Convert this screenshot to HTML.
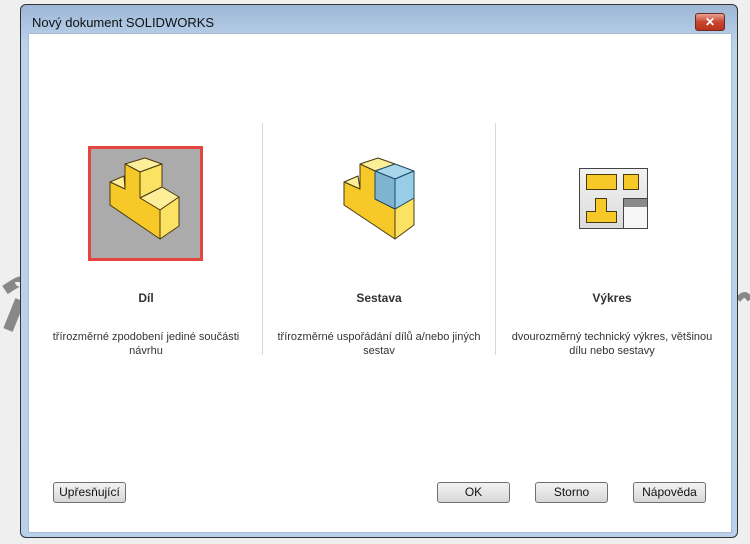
<!DOCTYPE html>
<html><head><meta charset="utf-8"><style>
body{margin:0;width:750px;height:544px;background:#efefef;position:relative;overflow:hidden;font-family:"Liberation Sans",sans-serif}
.win{position:absolute;left:20px;top:4px;width:716px;height:532px;border:1px solid #333;border-radius:6px;background:linear-gradient(#9db7d5,#bcd3ec 40px,#b9d1ea);}
.title{position:absolute;left:11px;top:10px;font-size:13px;color:#111}
.close{position:absolute;right:12px;top:8px;width:28px;height:16px;border:1px solid #6b2a22;border-radius:3px;background:linear-gradient(#e8a293,#c8452f 50%,#b9321c);color:#fff;font-size:12px;font-weight:bold;text-align:center;line-height:16px}
.inner{position:absolute;left:7px;top:28px;width:702px;height:498px;background:#fff;border:1px solid #a8bcd2}
.div{position:absolute;top:89px;width:1px;height:232px;background:#d8d8d8}
.col{position:absolute;width:232px;text-align:center;color:#333}
.h{position:absolute;top:257px;width:100%;font-weight:bold;font-size:12px}
.d{position:absolute;top:296px;left:10px;width:212px;font-size:11px;line-height:14px}
.btn{position:absolute;top:448px;height:19px;border:1px solid #707070;border-radius:3px;background:linear-gradient(#f2f2f2,#e6e6e6 50%,#d6d6d6);font-size:12px;text-align:center;line-height:19px;color:#111}
</style></head><body>
<svg style="position:absolute;left:0;top:0" width="750" height="544"><path d="M5 290 Q20 280 20 282 M8 330 L20 300" stroke="#888" stroke-width="10" fill="none"/><path d="M738 300 Q745 290 750 300" stroke="#888" stroke-width="6" fill="none"/></svg>
<div class="win">
<div class="title">Nový dokument SOLIDWORKS</div>
<div class="close">✕</div>
<div class="inner">
<div class="div" style="left:233px"></div>
<div class="div" style="left:466px"></div>
<div class="col" style="left:1px"><div class="h">Díl</div><div class="d">třírozměrné zpodobení jediné součásti návrhu</div></div>
<div class="col" style="left:234px"><div class="h">Sestava</div><div class="d">třírozměrné uspořádání dílů a/nebo jiných sestav</div></div>
<div class="col" style="left:467px"><div class="h">Výkres</div><div class="d">dvourozměrný technický výkres, většinou dílu nebo sestavy</div></div>
<div class="btn" style="left:24px;width:71px">Upřesňující</div>
<div class="btn" style="left:408px;width:71px">OK</div>
<div class="btn" style="left:506px;width:71px">Storno</div>
<div class="btn" style="left:604px;width:71px">Nápověda</div>
</div></div>
<svg style="position:absolute;left:0;top:0" width="750" height="544">
<defs><linearGradient id="g" x1="0" y1="0" x2="0" y2="1"><stop offset="0" stop-color="#f2f2f2"/><stop offset="1" stop-color="#dcdcdc"/></linearGradient></defs>
<rect x="89.5" y="147.5" width="112" height="112" fill="#ababab" stroke="#e5453e" stroke-width="3"/>
<g stroke="#4a3a10" stroke-width="1" stroke-linejoin="round">
<path d="M125 164 L145 158 L162 164 L140 172Z" fill="#fdef9a"/>
<path d="M140 172 L162 164 L162 187 L140 198Z" fill="#fbe263"/>
<path d="M110 182 L124 176 L125 189Z" fill="#fdef9a"/>
<path d="M140 198 L162 187 L179 197 L160 210Z" fill="#fdef9a"/>
<path d="M160 210 L179 197 L179 226 L160 239Z" fill="#fbe263"/>
<path d="M110 182 L125 189 L125 164 L140 172 L140 198 L160 210 L160 239 L110 205Z" fill="#f7c928"/>

<path d="M360 164 L378 158 L395 164 L375 171Z" fill="#fdef9a"/>
<path d="M344 182 L358 176 L360 189Z" fill="#fdef9a"/>
<path d="M344 182 L360 189 L360 164 L375 171 L375 199 L395 209 L395 239 L344 205Z" fill="#f7c928"/>
<path d="M395 209 L414 198 L414 225 L395 239Z" fill="#fbe263"/>
<g stroke="#1d4a66"><path d="M375 171 L395 164 L414 171 L395 179Z" fill="#a9d7ea"/><path d="M375 171 L395 179 L395 209 L375 199Z" fill="#7fb4d1"/><path d="M395 179 L414 171 L414 198 L395 209Z" fill="#97cde6"/></g>
</g>
<rect x="579.5" y="168.5" width="68" height="60" fill="url(#g)" stroke="#444"/>
<g fill="#f7c928" stroke="#4a3a10"><rect x="586.5" y="174.5" width="30" height="15"/><rect x="623.5" y="174.5" width="15" height="15"/><path d="M595.5 198.5 H606.5 V211.5 H616.5 V222.5 H586.5 V211.5 H595.5Z"/></g>
<rect x="623.5" y="198.5" width="24" height="30" fill="#f6f6f6" stroke="#444"/><rect x="624" y="199" width="23" height="8" fill="#8a8a8a"/>
</svg>
</body></html>
